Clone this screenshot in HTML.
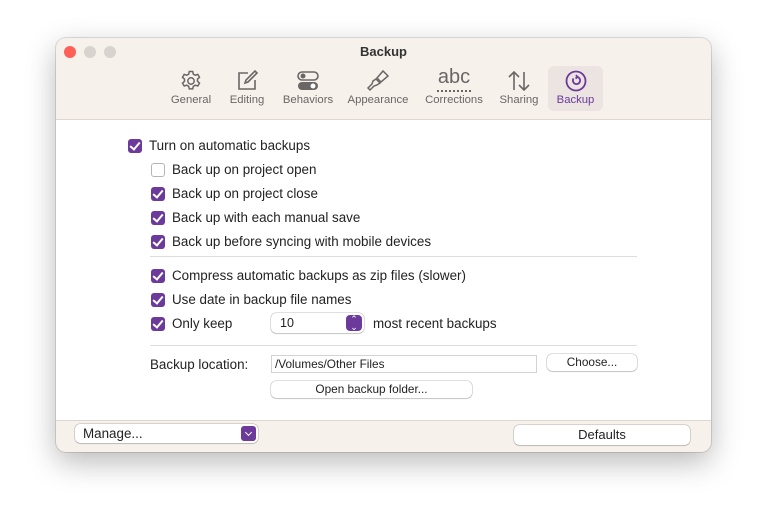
<!DOCTYPE html>
<html><head><style>
body{margin:0;width:767px;height:527px;background:#fff;font-family:"Liberation Sans",sans-serif;position:relative;overflow:hidden;color:#222}
.win{position:absolute;left:56px;top:38px;width:655px;height:414px;border-radius:10px;background:#f7f1ec;box-shadow:0 10px 30px rgba(0,0,0,.28),0 0 0 1px rgba(0,0,0,.12);overflow:hidden}
.light{position:absolute;top:8px;width:12px;height:12px;border-radius:50%}
.title{position:absolute;top:6px;left:0;width:100%;text-align:center;font-weight:bold;font-size:13px;color:#333}
.tab{position:absolute;top:28px;height:45px;text-align:center;font-size:11.3px;color:#6b6565}
.tab span{position:absolute;bottom:5px;left:-10px;right:-10px}
.tab svg{position:absolute;top:3px;left:50%;margin-left:-12px}
.content{position:absolute;left:0;top:81px;width:655px;height:300px;background:#fff;border-top:1px solid #ddd6d1;border-bottom:1px solid #ddd6d1}
.row{position:absolute;font-size:13.4px;color:#222;height:16px;line-height:16px;white-space:nowrap}
.cb{position:absolute;left:0;top:1px;width:14px;height:14px;border-radius:3px;background:#6b3a9b}
.cb:after{content:"";position:absolute;left:4px;top:1px;width:4px;height:8px;border:solid #fff;border-width:0 2px 2px 0;transform:rotate(40deg)}
.cb.off{background:#fff;border:1px solid #b9b4b4;box-sizing:border-box}
.cb.off:after{display:none}
.row .t{position:absolute;left:21px;white-space:nowrap}
.hr{position:absolute;height:1px;background:#e2dddd}
.btn{position:absolute;background:#fff;border-radius:5px;box-shadow:0 0 0 .5px rgba(0,0,0,.25),0 1px 1px rgba(0,0,0,.12);font-size:11.8px;text-align:center;color:#222}
</style></head><body>
<div class="win">
<div class="light" style="left:8px;background:#fe5f57"></div>
<div class="light" style="left:28px;background:#d9d3d0"></div>
<div class="light" style="left:48px;background:#d9d3d0"></div>
<div class="title">Backup</div>

<div class="tab" style="left:110px;width:50px"><svg width="24" height="24" viewBox="0 0 24 24" fill="none" stroke="#6b6565" stroke-width="1.5"><circle cx="12" cy="12" r="3.2"/><path d="M10.3 2.5h3.4l.6 2.6 1.9 1.1 2.6-.8 1.7 2.9-2 1.8v2.2l2 1.8-1.7 2.9-2.6-.8-1.9 1.1-.6 2.6h-3.4l-.6-2.6-1.9-1.1-2.6.8-1.7-2.9 2-1.8v-2.2l-2-1.8 1.7-2.9 2.6.8 1.9-1.1z"/></svg><span>General</span></div>
<div class="tab" style="left:166px;width:50px"><svg width="24" height="24" viewBox="0 0 24 24" fill="none" stroke="#6b6565" stroke-width="1.6"><path d="M13 4H4v16h16v-9"/><path d="M10 14l1-3 9-9 2 2-9 9z"/></svg><span>Editing</span></div>
<div class="tab" style="left:224px;width:56px"><svg width="24" height="24" viewBox="0 0 24 24"><rect x="2" y="3" width="20" height="8" rx="4" fill="none" stroke="#6b6565" stroke-width="1.6"/><circle cx="7" cy="7" r="2.5" fill="#6b6565"/><rect x="2" y="13" width="20" height="8" rx="4" fill="#6b6565"/><circle cx="17" cy="17" r="2.5" fill="#fff"/></svg><span>Behaviors</span></div>
<div class="tab" style="left:288px;width:68px"><svg width="24" height="24" viewBox="0 0 24 24" fill="none" stroke="#6b6565" stroke-width="1.5"><path d="M11 9l6-7 5 5-7 6z"/><path d="M10 10l4 4-3 2-3 1-4 4-2-2 4-4 1-3z"/></svg><span>Appearance</span></div>
<div class="tab" style="left:364px;width:68px"><div style="position:absolute;left:0;right:0;top:0;font-size:20px;line-height:22px;color:#6b6565">abc</div><div style="position:absolute;left:17px;right:17px;top:24px;border-top:2px dotted #6b6565"></div><span>Corrections</span></div>
<div class="tab" style="left:440px;width:46px"><svg width="24" height="24" viewBox="0 0 24 24" fill="none" stroke="#6b6565" stroke-width="1.6"><path d="M7 21V3M2 8l5-5 5 5M17 3v18M12 16l5 5 5-5"/></svg><span>Sharing</span></div>
<div class="tab" style="left:492px;width:55px;background:#ebe4e1;border-radius:6px;color:#6b3a9b"><svg width="24" height="24" viewBox="0 0 24 24" fill="none" stroke="#6b3a9b" stroke-width="1.8"><circle cx="12" cy="12" r="9.5"/><path d="M9.5 9.5a3.6 3.6 0 1 0 3-1.6"/><path d="M12 6l1.5 2-2 1.5"/></svg><span>Backup</span></div>

<div class="content">
<div class="row" style="left:72px;top:18px"><div class="cb"></div><div class="t">Turn on automatic backups</div></div>
<div class="row" style="left:95px;top:42px"><div class="cb off"></div><div class="t">Back up on project open</div></div>
<div class="row" style="left:95px;top:66px"><div class="cb"></div><div class="t">Back up on project close</div></div>
<div class="row" style="left:95px;top:90px"><div class="cb"></div><div class="t">Back up with each manual save</div></div>
<div class="row" style="left:95px;top:114px"><div class="cb"></div><div class="t">Back up before syncing with mobile devices</div></div>
<div class="hr" style="left:94px;width:487px;top:136px"></div>
<div class="row" style="left:95px;top:148px"><div class="cb"></div><div class="t">Compress automatic backups as zip files (slower)</div></div>
<div class="row" style="left:95px;top:172px"><div class="cb"></div><div class="t">Use date in backup file names</div></div>
<div class="row" style="left:95px;top:196px"><div class="cb"></div><div class="t">Only keep</div></div>
<div class="btn" style="left:215px;top:193px;width:93px;height:20px;text-align:left"><span style="position:absolute;left:9px;top:3px;font-size:12.5px">10</span><div style="position:absolute;right:2px;top:2px;width:16px;height:16px;border-radius:4px;background:#6b3a9b;color:#fff;font-size:9px;line-height:8px;text-align:center">⌃<br>⌄</div></div>
<div class="row" style="left:317px;top:196px">most recent backups</div>
<div class="hr" style="left:94px;width:487px;top:225px"></div>
<div class="row" style="left:94px;top:237px">Backup location:</div>
<div style="position:absolute;left:215px;top:235px;width:266px;height:18px;border:1px solid #d6d2d2;box-sizing:border-box;font-size:11.8px;line-height:16px;padding-left:3px">/Volumes/Other Files</div>
<div class="btn" style="left:491px;top:234px;width:90px;height:17px;line-height:17px">Choose...</div>
<div class="btn" style="left:215px;top:261px;width:201px;height:17px;line-height:17px">Open backup folder...</div>
</div>

<div class="btn" style="left:19px;top:386px;width:183px;height:19px;text-align:left;font-size:13.4px"><span style="position:absolute;left:8px;top:2px">Manage...</span><div style="position:absolute;right:2px;top:2px;width:15px;height:15px;border-radius:3px;background:#6b3a9b"><div style="position:absolute;left:5px;top:4px;width:4px;height:4px;border:solid #fff;border-width:0 1.5px 1.5px 0;transform:rotate(45deg)"></div></div></div>
<div class="btn" style="left:458px;top:387px;width:176px;height:20px;line-height:20px;font-size:13px">Defaults</div>
</div>
</body></html>
